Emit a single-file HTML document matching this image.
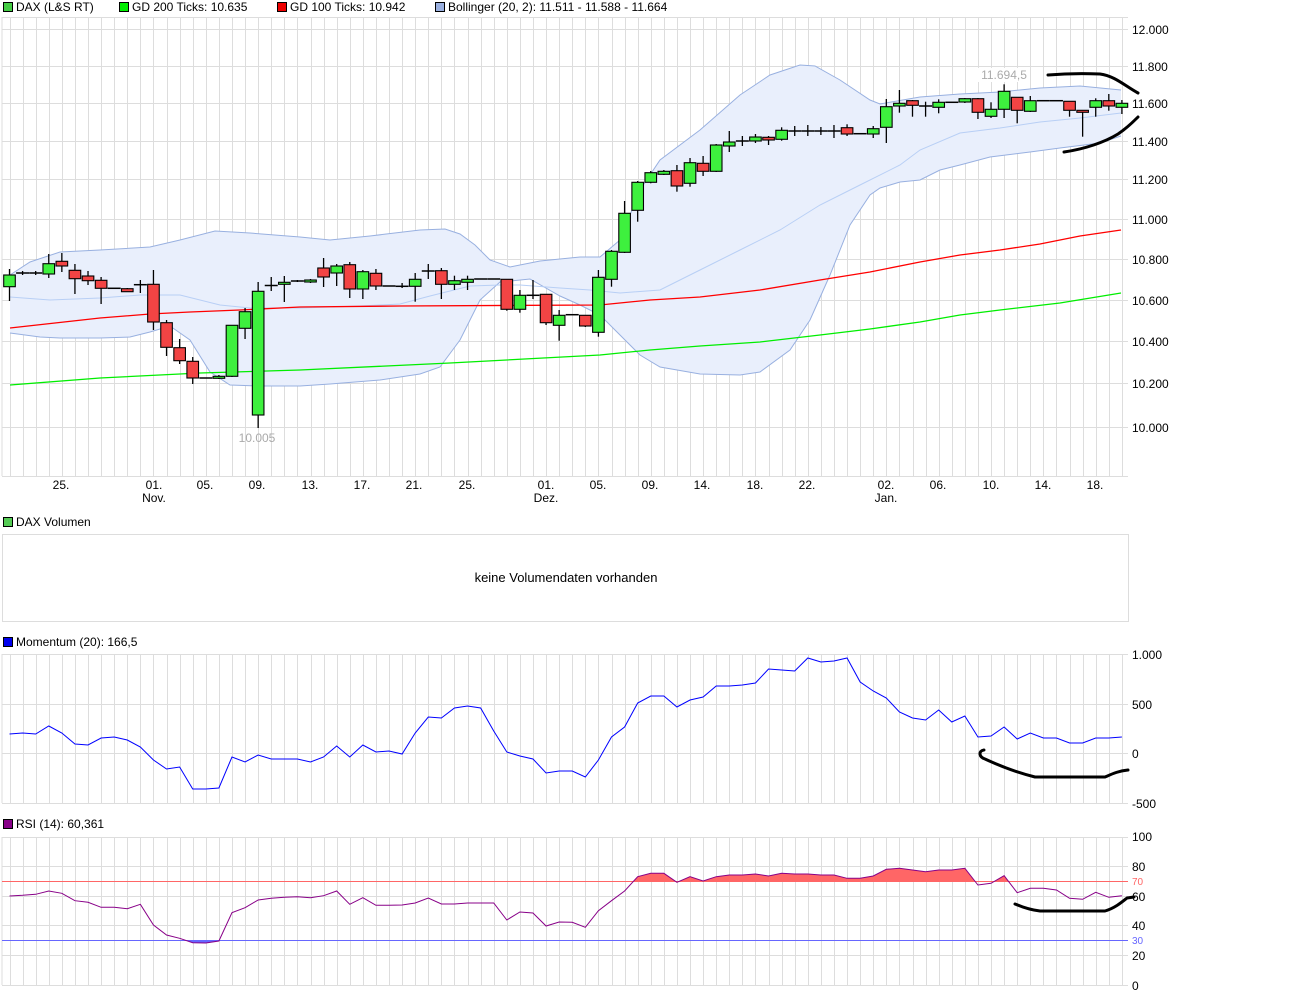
<!DOCTYPE html>
<html><head><meta charset="utf-8">
<style>
html,body{margin:0;padding:0;background:#fff;}
body{width:1289px;height:997px;overflow:hidden;position:relative;font-family:"Liberation Sans",sans-serif;font-size:12px;color:#000;}
svg{position:absolute;left:0;top:0;}
</style></head>
<body>
<svg id="s" width="1289" height="997" xmlns="http://www.w3.org/2000/svg" font-family="Liberation Sans, sans-serif" font-size="12">
<!-- legends -->
<rect x="3.5" y="2.5" width="9" height="9" fill="#4c4" stroke="#000"/>
<text x="16" y="11">DAX (L&amp;S RT)</text>
<rect x="119.5" y="2.5" width="9" height="9" fill="#0e0" stroke="#000"/>
<text x="132" y="11">GD 200 Ticks: 10.635</text>
<rect x="277.5" y="2.5" width="9" height="9" fill="#e00" stroke="#000"/>
<text x="290" y="11">GD 100 Ticks: 10.942</text>
<rect x="435.5" y="2.5" width="9" height="9" fill="#9ab0e0" stroke="#000"/>
<text x="448" y="11">Bollinger (20, 2): 11.511 - 11.588 - 11.664</text>

<rect x="3.5" y="517.5" width="9" height="9" fill="#5c5" stroke="#000"/>
<text x="16" y="526">DAX Volumen</text>
<rect x="3.5" y="637.5" width="9" height="9" fill="#00e" stroke="#000"/>
<text x="16" y="646">Momentum (20): 166,5</text>
<rect x="3.5" y="819.5" width="9" height="9" fill="#808" stroke="#000"/>
<text x="16" y="828">RSI (14): 60,361</text>

<!-- volume box -->
<rect x="2.5" y="534.5" width="1126" height="87" fill="#fff" stroke="#ddd"/>
<text x="566" y="582" text-anchor="middle" font-size="13">keine Volumendaten vorhanden</text>

<g id="grid"></g>
<g id="boll"></g>
<g id="lines"></g>
<g id="candles"></g>

<!-- y labels main -->
<g font-size="12">
<text x="1132" y="34">12.000</text>
<text x="1132" y="71">11.800</text>
<text x="1132" y="108">11.600</text>
<text x="1132" y="146">11.400</text>
<text x="1132" y="184">11.200</text>
<text x="1132" y="224">11.000</text>
<text x="1132" y="264">10.800</text>
<text x="1132" y="305">10.600</text>
<text x="1132" y="346">10.400</text>
<text x="1132" y="388">10.200</text>
<text x="1132" y="432">10.000</text>

<text x="1132" y="659">1.000</text>
<text x="1132" y="709">500</text>
<text x="1132" y="758">0</text>
<text x="1132" y="808">-500</text>

<text x="1132" y="841">100</text>
<text x="1132" y="871">80</text>
<text x="1132" y="885" font-size="10" fill="#f66">70</text>
<text x="1132" y="901">60</text>
<text x="1132" y="930">40</text>
<text x="1132" y="944" font-size="10" fill="#66f">30</text>
<text x="1132" y="960">20</text>
<text x="1132" y="990">0</text>
</g>
<!-- dates -->
<g text-anchor="middle">
<text x="61" y="489">25.</text>
<text x="154" y="489">01.</text><text x="154" y="502">Nov.</text>
<text x="205" y="489">05.</text>
<text x="257" y="489">09.</text>
<text x="310" y="489">13.</text>
<text x="362" y="489">17.</text>
<text x="414" y="489">21.</text>
<text x="467" y="489">25.</text>
<text x="546" y="489">01.</text><text x="546" y="502">Dez.</text>
<text x="598" y="489">05.</text>
<text x="650" y="489">09.</text>
<text x="702" y="489">14.</text>
<text x="755" y="489">18.</text>
<text x="807" y="489">22.</text>
<text x="886" y="489">02.</text><text x="886" y="502">Jan.</text>
<text x="938" y="489">06.</text>
<text x="991" y="489">10.</text>
<text x="1043" y="489">14.</text>
<text x="1095" y="489">18.</text>
</g>
<text x="257" y="442" text-anchor="middle" fill="#aaa">10.005</text>
<rect x="978" y="68" width="52" height="14" fill="#fff"/>
<text x="1004" y="79" text-anchor="middle" fill="#aaa">11.694,5</text>

<!-- annotations -->
<g fill="none" stroke="#000" stroke-width="3" stroke-linecap="round" stroke-linejoin="round">
<path d="M1048,75 C1060,74 1075,73 1100,74 C1115,76 1125,86 1138,93"/>
<path d="M1064,152 C1085,149 1105,142 1118,134 C1127,128 1133,122 1138,117"/>
<path d="M984,750 C978,751 979,757 985,759 C1000,766 1015,772 1035,777 L1105,777 C1112,774 1118,771 1128,770"/>
<path d="M1015,904 C1022,907 1030,910 1040,911 L1105,911 C1115,908 1122,902 1127,898 L1134,897"/>
</g>
</svg>
<script>
(function(){
var NS="http://www.w3.org/2000/svg";
function el(p,t,a){var e=document.createElementNS(NS,t);for(var k in a)e.setAttribute(k,a[k]);p.appendChild(e);return e;}
var g=document.getElementById('grid'),bo=document.getElementById('boll'),ln=document.getElementById('lines'),cd=document.getElementById('candles');
function X(i){return 9.5+i*13.087;}
// panels
var panels=[[17,476],[654,803],[837,985]];
panels.forEach(function(p){
 for(var i=0;i<86;i++){var x=Math.round(X(i))+0.5;el(g,'line',{x1:x,x2:x,y1:p[0],y2:p[1],stroke:'#ddd'});}
 el(g,'line',{x1:2,x2:2,y1:p[0],y2:p[1],stroke:'#ddd'});
});
[17,29,66,103,141,179,219,259,300,341,383,427,476].forEach(function(y){el(g,'line',{x1:2,x2:1128,y1:y+.5,y2:y+.5,stroke:'#ddd'});});
[654,704,753,803].forEach(function(y){el(g,'line',{x1:2,x2:1128,y1:y+.5,y2:y+.5,stroke:'#ddd'});});
[837,866,896,925,955,985].forEach(function(y){el(g,'line',{x1:2,x2:1128,y1:y+.5,y2:y+.5,stroke:'#ddd'});});
function pts(a){return a.map(function(p){return p[0]+','+p[1];}).join(' ');}
var up=[[10,275],[30,262],[60,252],[100,250],[150,247],[180,240],[215,231],[250,233],[300,237],[330,240],[370,236],[420,230],[445,229],[460,234],[475,245],[490,260],[510,267],[540,261],[580,257],[600,257],[620,240],[640,190],[660,160],[700,130],[740,95],[770,75],[800,65],[815,66],[840,80],[870,100],[880,104],[920,97],[960,94],[1000,92],[1040,88],[1080,86],[1121,90]];
var lo=[[10,333],[40,337],[60,338],[100,338],[130,337],[150,332],[170,326],[190,340],[210,372],[230,385],[260,386],[300,386],[330,384],[380,380],[420,374],[440,367],[460,340],[480,300],[500,282],[530,279],[560,296],[580,305],[600,315],[620,335],[640,355],[660,367],[700,374],[740,375],[760,372],[790,350],[810,320],[830,275],[850,225],[870,195],[880,188],[900,182],[920,180],[940,170],[960,165],[990,157],[1030,152],[1060,148],[1100,143],[1121,136]];
var mid=[[10,297],[50,300],[100,298],[140,295],[180,295],[220,305],[250,308],[300,308],[360,306],[400,304],[430,296],[470,286],[500,285],[520,285],[560,288],[590,290],[620,293],[660,290],[700,270],[740,250],[780,230],[820,205],[860,185],[900,165],[920,150],[960,133],[1000,128],[1040,122],[1080,118],[1121,113]];
el(bo,'polygon',{points:pts(up.concat(lo.slice().reverse())),fill:'#e9effc'});
el(bo,'polyline',{points:pts(up),fill:'none',stroke:'#98b0e0'});
el(bo,'polyline',{points:pts(lo),fill:'none',stroke:'#98b0e0'});
el(bo,'polyline',{points:pts(mid),fill:'none',stroke:'#b8cff5'});
var r100=[[10,328],[100,318],[150,314],[190,312],[240,310],[300,307],[400,306],[600,305],[650,300],[700,297],[760,290],[820,280],[870,272],[920,262],[960,255],[1000,250],[1040,244],[1080,236],[1121,230]];
var g200=[[10,385],[100,378],[200,373],[300,370],[450,363],[600,355],[650,350],[700,346],[760,342],[820,335],[870,329],[920,322],[960,315],[1000,310],[1060,303],[1121,293]];
el(ln,'polyline',{points:pts(r100),fill:'none',stroke:'#f00','stroke-width':1.3});
el(ln,'polyline',{points:pts(g200),fill:'none',stroke:'#0e0','stroke-width':1.3});
// candles: [open(top/bottom by color), close, high, low] as [bodyTop, bodyBot, wickTop, wickBot, color]
var C=[
[275,286.7,269,301,'g'],[273,273,271,275,'d'],[273,273,271,275,'d'],[263.7,274,254,278,'g'],[261.3,266,253,272,'r'],
[270.3,278.7,264,294,'r'],[276,280.7,271,285,'r'],[280.3,288.3,277,304,'r'],[288.3,288.3,288,289,'d'],[288.7,291.7,288,292,'r'],
[284.7,284.7,280,293,'d'],[284.3,322,270,330,'r'],[322.7,347.3,320,356,'r'],[347.7,360.7,339,364,'r'],[361.3,378,357,384,'r'],
[378,378,378,378,'d'],[376.3,378.3,375,379,'g'],[325.3,376.3,325,377,'g'],[311.7,328.3,308,339,'g'],[291.3,415,282,428,'g'],
[285.5,285.5,277,291,'d'],[282.3,284.3,276,302,'g'],[281,281,280,282,'d'],[280,282,279,283,'g'],[268,277,258,287,'r'],
[266,273,264,286,'g'],[264.7,289,262,298,'r'],[271.7,289,270,299,'g'],[273.3,286,269,290,'r'],[286,286,286,286,'d'],
[286.3,286.3,283,288,'d'],[279.3,286.3,273,301.7,'g'],[271,271,264,279,'d'],[270.7,284.3,268,299,'r'],[280.7,284.3,275.7,290,'g'],
[279.3,282.3,275.7,290,'g'],[279,279,279,279,'d'],[279,279,279,279,'d'],[279.3,309.3,279,310.7,'r'],[295.3,309.3,290,312.7,'g'],
[295.3,295.3,280,299,'d'],[294.3,322.7,294,325,'r'],[315.3,325.3,310,340.7,'g'],[314.7,314.7,314,315,'d'],[315.3,326,315,327,'r'],
[277.3,332.3,270,336.7,'g'],[251.3,279.3,250,286.7,'g'],[213.3,252.3,201,253,'g'],[182.3,210.3,181,221.7,'g'],[172.7,182.3,171,183.3,'g'],
[171.3,174.3,170,175,'g'],[170.7,186,165,191.7,'r'],[162.7,183.3,158,186.7,'g'],[163.3,171.3,156,176,'r'],[145,171.3,144,172,'g'],
[142,146,131,152,'g'],[141,141,136,146,'d'],[137,141,134,143,'g'],[137.3,140,136,145,'r'],[130.3,139.3,127.3,140.7,'g'],
[131,131,126,136,'d'],[131,131,125,136,'d'],[131,131,127,135,'d'],[131,131,125,138,'d'],[127.7,134,124.3,136,'r'],
[133.7,133.7,133,134,'d'],[128.7,134,126,138,'g'],[106.7,127.3,99,143,'g'],[103.3,106,90,112.7,'g'],[100.7,105.3,100,116.7,'r'],
[106,106,101.7,116.7,'d'],[102.3,107.3,99.3,113.3,'g'],[102.3,102.3,102,103,'d'],[98.7,102,98,103,'g'],[98.7,112.3,98,119,'r'],
[109.3,116.3,102.3,118,'g'],[91.3,109.3,84.3,118,'g'],[97.3,110.3,97,123.3,'r'],[100.7,111.3,96,112,'g'],[100.7,100.7,100.5,101,'d'],
[100.7,100.7,100.5,101,'d'],[101.3,110.3,101,116.7,'r'],[110.3,112.3,111,136.7,'r'],[100.7,107.3,98.3,116.7,'g'],[100.7,106,94,110.7,'r'],
[103.3,107.3,100,114,'g']];
C.forEach(function(c,i){
 var x=X(i);
 if(c[2]<c[3]) el(cd,'line',{x1:x,x2:x,y1:c[2],y2:c[3],stroke:'#000','stroke-width':1.3});
 if(c[4]=='d'){el(cd,'line',{x1:x-6.5,x2:x+6.5,y1:c[0],y2:c[0],stroke:'#000','stroke-width':1.5});}
 else{var h=Math.max(c[1]-c[0],1.5);el(cd,'rect',{x:x-5.8,y:c[0],width:11.6,height:h,fill:c[4]=='g'?'#3ef03e':'#f24444',stroke:'#000','stroke-width':1.1});}
});
// momentum
var M=[734,733,734,726,733,744,745,738,737,740,747,760,769,767,789,789,788,757,762,755,759,759,759,762,757,746,757,745,752,751,754,733,717,718,708,706,708,731,752,756,759,773,771,771,777,760,737,727,703,696,696,707,700,697,686,686,685,683,669,670,671,658,662,661,658,682,691,698,712,718,720,710,722,716,737,736,727,739,733,738,738,743,743,738,738,737];
el(ln,'polyline',{points:M.map(function(y,i){return X(i)+','+y;}).join(' '),fill:'none',stroke:'#00f'});
// RSI
var R=[896,895.3,894.3,891,893.3,900.7,902.3,907.3,907.3,908.7,904.3,925,935,938.3,942.7,943,941,912.7,907.7,900,898.3,897.3,896.7,897.7,895.7,891,904.3,897.7,905.3,905.3,905,903,898,904,904,903,903,903,920,912,913,926,922,922.3,927.3,910.7,900.7,891,876.7,873.3,873.3,882.3,876.7,881,876.7,875,875,874,876,873.3,874,874,875,875,878.3,878.3,876,869.3,868.3,870,871.7,870,870,868.3,885,883.3,875.7,892.7,888.3,888.3,890,898.3,899.3,892.3,897.3,895.7];
var rp=R.map(function(y,i){return X(i)+','+y;}).join(' ');
var d=el(document.getElementById('s'),'defs',{});
var c1=el(d,'clipPath',{id:'ca'});el(c1,'rect',{x:0,y:0,width:1289,height:881});
var c2=el(d,'clipPath',{id:'cb'});el(c2,'rect',{x:0,y:940,width:1289,height:57});
el(ln,'polygon',{points:X(0)+',881 '+rp+' '+X(85)+',881',fill:'#f66','clip-path':'url(#ca)'});
el(ln,'polygon',{points:X(0)+',940 '+rp+' '+X(85)+',940',fill:'#66f','clip-path':'url(#cb)'});
el(ln,'line',{x1:2,x2:1128,y1:881.5,y2:881.5,stroke:'#f66'});
el(ln,'line',{x1:2,x2:1128,y1:940.5,y2:940.5,stroke:'#66f'});
el(ln,'polyline',{points:rp,fill:'none',stroke:'#808'});
})();
</script>
</body></html>
